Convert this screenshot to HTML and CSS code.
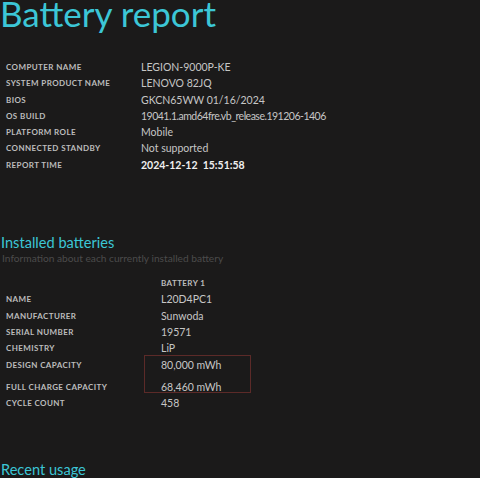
FILE: index.html
```html
<!DOCTYPE html>
<html>
<head>
<meta charset="utf-8">
<link rel="stylesheet" href="styles.css">
</head>
<body>
<h1 class="title">Battery report</h1>
<div class="info">
  <div class="lbl">COMPUTER NAME</div><div class="val">LEGION-9000P-KE</div>
  <div class="lbl">SYSTEM PRODUCT NAME</div><div class="val">LENOVO 82JQ</div>
  <div class="lbl">BIOS</div><div class="val">GKCN65WW 01/16/2024</div>
  <div class="lbl">OS BUILD</div><div class="val tight">19041.1.amd64fre.vb_release.191206-1406</div>
  <div class="lbl">PLATFORM ROLE</div><div class="val">Mobile</div>
  <div class="lbl">CONNECTED STANDBY</div><div class="val">Not supported</div>
  <div class="lbl">REPORT TIME</div><div class="val strong">2024-12-12&nbsp;&nbsp;15:51:58</div>
</div>
<h2 class="section">Installed batteries</h2>
<div class="sub">Information about each currently installed battery</div>
<div class="batt">
  <div class="lbl"></div><div class="lbl">BATTERY 1</div>
  <div class="lbl">NAME</div><div class="val">L20D4PC1</div>
  <div class="lbl">MANUFACTURER</div><div class="val">Sunwoda</div>
  <div class="lbl">SERIAL NUMBER</div><div class="val">19571</div>
  <div class="lbl">CHEMISTRY</div><div class="val">LiP</div>
  <div class="lbl">DESIGN CAPACITY</div><div class="val">80,000 mWh</div>
  <div class="lbl tall">FULL CHARGE CAPACITY</div><div class="val tall">68,460 mWh</div>
  <div class="lbl">CYCLE COUNT</div><div class="val">458</div>
  <div class="mark"></div>
</div>
<h2 class="section recent">Recent usage</h2>
</body>
</html>
```
FILE: styles.css
```css
html, body { margin: 0; padding: 0; }
body {
  background: #1b1a1a;
  width: 480px;
  height: 478px;
  overflow: hidden;
  font-family: "Lato", "Open Sans", sans-serif;
  color: #c9c9c9;
}
.title {
  margin: -7px 0 0 0;
  font-weight: 400;
  font-size: 35px;
  line-height: 40px;
  color: #3cc6d6;
}
.info {
  margin: 26px 0 0 6px;
  display: grid;
  grid-template-columns: 135px auto;
}
.lbl {
  font-size: 8px;
  line-height: 16.3px;
  height: 16.3px;
  font-weight: 700;
  color: #bdbdbd;
  letter-spacing: 0.4px;
  white-space: nowrap;
}
.val {
  font-size: 10.5px;
  line-height: 16.3px;
  height: 16.3px;
  color: #c6c6c6;
  white-space: nowrap;
}
.tight { letter-spacing: -0.5px; }
.strong { color: #f0f0f0; font-weight: 700; }
.section {
  margin: 0;
  font-weight: 400;
  font-size: 14.6px;
  line-height: 18px;
  color: #3cc6d6;
  padding-left: 1px;
}
.info + .section { margin-top: 61px; }
.sub {
  font-size: 10.2px;
  line-height: 13px;
  color: #4b4b4b;
  padding-left: 2px;
}
.batt {
  position: relative;
  margin: 10px 0 0 6px;
  display: grid;
  grid-template-columns: 155px auto;
}
.batt .tall { height: 22px; padding-top: 6px; box-sizing: border-box; line-height: 16.3px; }
.batt .lbl.tall, .batt .val.tall { height: 22px; }
.mark {
  position: absolute;
  left: 138px;
  top: 80px;
  width: 107px;
  height: 38px;
  box-sizing: border-box;
  border: 1px solid #5c2a28;
}
.recent { margin-top: 50px; }
```
